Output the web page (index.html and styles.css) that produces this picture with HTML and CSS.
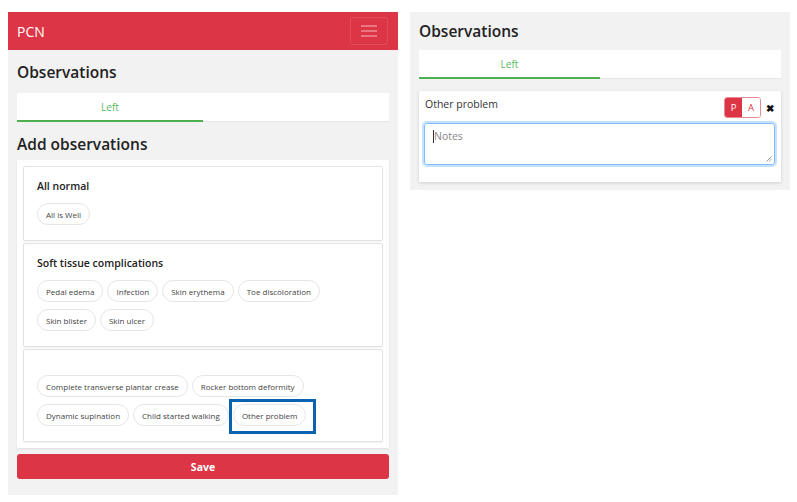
FILE: index.html
```html
<!DOCTYPE html>
<html>
<head>
<meta charset="utf-8">
<link rel="stylesheet" href="styles.css">
</head>
<body>
<div class="page">
  <section class="panel panel-left">
    <nav class="navbar">
      <span class="brand">PCN</span>
      <button class="toggler" aria-label="menu">
        <svg width="18" height="14" viewBox="0 0 18 14"><path d="M1 2h16M1 7h16M1 12h16" stroke="#f08a94" stroke-width="1.4" fill="none"/></svg>
      </button>
    </nav>
    <div class="panel-body">
      <h2 class="title">Observations</h2>
      <div class="tabs"><div class="tab active">Left</div><div class="tab"></div></div>
      <h2 class="title title-add">Add observations</h2>
      <div class="cards">
        <div class="card">
          <h3 class="card-title">All normal</h3>
          <div class="chips"><span class="chip">All is Well</span></div>
        </div>
        <div class="card">
          <h3 class="card-title">Soft tissue complications</h3>
          <div class="chips">
            <span class="chip">Pedal edema</span>
            <span class="chip">Infection</span>
            <span class="chip">Skin erythema</span>
            <span class="chip">Toe discoloration</span>
            <span class="chip">Skin blister</span>
            <span class="chip">Skin ulcer</span>
          </div>
        </div>
        <div class="card">
          <h3 class="card-title card-title-empty"></h3>
          <div class="chips">
            <span class="chip">Complete transverse plantar crease</span>
            <span class="chip">Rocker bottom deformity</span>
            <span class="chip">Dynamic supination</span>
            <span class="chip">Child started walking</span>
            <span class="chip chip-highlight">Other problem</span>
          </div>
        </div>
      </div>
      <button class="save">Save</button>
    </div>
  </section>
  <section class="panel panel-right">
    <div class="panel-body">
      <h2 class="title title-right">Observations</h2>
      <div class="tabs"><div class="tab active">Left</div><div class="tab"></div></div>
      <div class="obs-card">
        <div class="obs-head">
          <span class="obs-name">Other problem</span>
          <div class="obs-actions">
            <div class="pa"><span class="pa-p">P</span><span class="pa-a">A</span></div>
            <span class="close">&#x2716;</span>
          </div>
        </div>
        <div class="notes"><span class="caret"></span><span class="placeholder">Notes</span>
          <svg class="grip" width="6" height="6" viewBox="0 0 6 6"><path d="M5.5 0.5L0.5 5.5M5.5 3L3 5.5" stroke="#888" stroke-width="0.8"/></svg>
        </div>
      </div>
    </div>
  </section>
</div>
</body>
</html>
```

FILE: styles.css
```css
* { box-sizing: border-box; }
html, body { margin: 0; padding: 0; background: #fff; }
body { font-family: "Open Sans", "Noto Sans", sans-serif; color: #212529; }
.page {
  display: flex;
  align-items: flex-start;
  gap: 12px;
  padding: 12px 0 0 8px;
}
.panel { background: #f2f2f2; }
.panel-left { width: 390px; height: 483px; }
.panel-right { width: 380px; padding-bottom: 8px; }
.navbar {
  height: 38px;
  background: #dc3545;
  display: flex;
  align-items: center;
  justify-content: space-between;
  padding: 0 10px 0 9px;
}
.brand { color: #fff; font-size: 14px; }
.toggler {
  width: 38px; height: 28px;
  background: transparent;
  border: 1px solid #e04c5a;
  border-radius: 3px;
  display: flex; align-items: center; justify-content: center;
  padding: 0;
}
.panel-body { padding: 0 9px; }
.title {
  margin: 11px 0 10px;
  font-size: 15.5px;
  line-height: 22px;
  font-weight: 600;
  color: #222;
}
.title-add { margin: 11px 0 5px; }
.title-right { margin: 8px 0 8px; }
.tabs {
  display: flex;
  height: 29px;
  background: #fff;
  border-bottom: 1px solid #e6e6e6;
}
.tab { flex: 1; font-size: 10px; color: #5cb85c; display: flex; align-items: center; justify-content: center; }
.tab.active { border-bottom: 2px solid #4cb050; margin-bottom: -1px; }
.cards {
  background: #fff;
  padding: 6px;
  display: flex;
  flex-direction: column;
  gap: 2px;
  box-shadow: 0 1px 2px rgba(0,0,0,0.08);
}
.card {
  border: 1px solid #e3e3e3;
  border-radius: 2px;
  padding: 11px 13px 15px;
  box-shadow: 0 1px 2px rgba(0,0,0,0.06);
}
.card-title {
  margin: 0 0 9px;
  font-size: 10.5px;
  line-height: 16px;
  font-weight: 600;
  color: #222;
}
.card-title-empty { height: 5px; }
.chips { display: flex; flex-wrap: wrap; gap: 7px 4px; }
.chip {
  position: relative;
  display: inline-flex; align-items: center;
  height: 22px;
  padding: 0 8px;
  font-size: 8px;
  color: #444;
  border: 1px solid #e6e6e6;
  border-radius: 11px;
  background: #fff;
}
.chip-highlight::after {
  content: "";
  position: absolute;
  left: -5px; right: -11px; top: -6px; bottom: -9px;
  border: 3px solid #0b63ad;
}
.save {
  display: block;
  width: 100%;
  height: 25px;
  margin-top: 6px;
  background: #dc3545;
  border: none;
  border-radius: 3px;
  color: #fff;
  font-family: inherit;
  font-size: 10.5px;
  font-weight: 700;
}
.obs-card {
  margin-top: 12px;
  background: #fff;
  padding: 6px 6px 17px;
  box-shadow: 0 1px 3px rgba(0,0,0,0.15);
}
.obs-head { display: flex; justify-content: space-between; align-items: flex-start; height: 26px; }
.obs-name { font-size: 10.5px; color: #333; }
.obs-actions { display: flex; align-items: center; gap: 5px; margin-right: 1px; }
.pa {
  display: flex;
  height: 21px;
  border: 1px solid #e88a93;
  border-radius: 3px;
  overflow: hidden;
  font-size: 9.5px;
}
.pa-p { width: 17px; background: #dc3545; color: #fff; display: flex; align-items: center; justify-content: center; }
.pa-a { width: 18px; background: #fff; color: #dc3545; display: flex; align-items: center; justify-content: center; }
.close { font-size: 10px; color: #111; font-weight: 700; }
.notes {
  position: relative;
  height: 42px;
  margin: 0 0 0 -1px;
  border: 1px solid #80bdff;
  border-radius: 3px;
  box-shadow: 0 0 0 2px rgba(128,189,255,0.45);
  padding: 5px 8px;
  font-size: 10.5px;
  display: flex;
  align-items: flex-start;
}
.caret { width: 1px; height: 13px; background: #333; margin-top: 1px; }
.placeholder { color: #888; }
.grip { position: absolute; right: 2px; bottom: 2px; }
```
